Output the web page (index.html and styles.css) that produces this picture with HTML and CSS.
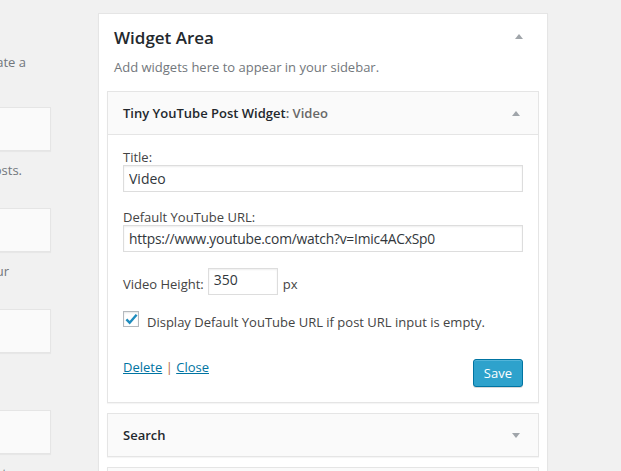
FILE: index.html
```html
<!DOCTYPE html>
<html lang="en">
<head>
<meta charset="utf-8">
<title>Widgets</title>
<link rel="stylesheet" href="styles.css">
</head>
<body>
<div class="page">
  <div class="available">
    <p class="intro">To activate a</p>
    <div class="avail-item">
      <div class="avail-box"></div>
      <p class="avail-desc desc-1">Your site’s most recent Posts.</p>
    </div>
    <div class="avail-item">
      <div class="avail-box"></div>
      <p class="avail-desc desc-2">A monthly archive of your</p>
    </div>
    <div class="avail-item">
      <div class="avail-box"></div>
      <p class="avail-desc desc-3">Links.</p>
    </div>
    <div class="avail-item">
      <div class="avail-box"></div>
      <p class="avail-desc desc-4">Your site’s most recent comments</p>
    </div>
  </div>

  <div class="sidebar">
    <div class="sidebar-head">
      <h2 class="sidebar-title">Widget Area</h2>
      <svg class="arrow arrow-sidebar" width="8" height="5" viewBox="0 0 8 5"><path d="M0 5 L4 0 L8 5 Z"/></svg>
    </div>
    <p class="sidebar-desc">Add widgets here to appear in your sidebar.</p>

    <div class="widget">
      <div class="widget-top">
        <h3 class="widget-title">Tiny YouTube Post Widget<span class="in-title">: Video</span></h3>
        <svg class="arrow" width="8" height="5" viewBox="0 0 8 5"><path d="M0 5 L4 0 L8 5 Z"/></svg>
      </div>
      <div class="widget-body">
        <label class="field-label">Title:</label>
        <input class="text-input" type="text" value="Video">
        <label class="field-label field-gap">Default YouTube URL:</label>
        <input class="text-input url-input" type="text" value="https://www.youtube.com/watch?v=Imic4ACxSp0">
        <div class="height-row">
          <span class="row-label">Video Height:</span>
          <input class="small-input" type="text" value="350">
          <span class="row-label">px</span>
        </div>
        <div class="check-row">
          <span class="checkbox">
            <svg width="14" height="12" viewBox="0 0 14 12"><path d="M1.5 6.5 L5 10 L12.5 1.5" fill="none" stroke="#1e8cbe" stroke-width="2.6" stroke-linejoin="miter"/></svg>
          </span>
          <span class="check-label">Display Default YouTube URL if post URL input is empty.</span>
        </div>
        <div class="actions">
          <div class="links"><a href="#" class="link">Delete</a> <span class="sep">|</span> <a href="#" class="link">Close</a></div>
          <button class="save">Save</button>
        </div>
      </div>
    </div>

    <div class="widget collapsed">
      <div class="widget-top no-border">
        <h3 class="widget-title">Search</h3>
        <svg class="arrow" width="8" height="5" viewBox="0 0 8 5"><path d="M0 0 L8 0 L4 5 Z"/></svg>
      </div>
    </div>

    <div class="widget collapsed">
      <div class="widget-top no-border">
        <h3 class="widget-title">Recent Posts</h3>
      </div>
    </div>
  </div>
</div>
</body>
</html>
```

FILE: styles.css
```css
html, body {
  margin: 0;
  padding: 0;
  height: 100%;
  overflow: hidden;
}
body {
  background: #f1f1f1;
  font-family: "Open Sans", "Liberation Sans", sans-serif;
  color: #444;
  font-size: 13px;
}
.page {
  display: flex;
  align-items: flex-start;
}

/* left column of available widgets (cut off at the left edge) */
.available {
  width: 259px;
  margin-left: -208px;
  flex: none;
  display: flex;
  flex-direction: column;
}
.intro {
  margin: 52px 0 35px;
  line-height: 20px;
  text-align: right;
  padding-right: 25px;
  color: #72777c;
  white-space: nowrap;
}
.avail-item {
  display: flex;
  flex-direction: column;
  margin-bottom: 27px;
}
.avail-box {
  height: 42px;
  background: #fafafa;
  border: 1px solid #e5e5e5;
  box-shadow: 0 1px 1px rgba(0,0,0,0.04);
}
.avail-desc {
  margin: 9px 0 1px;
  line-height: 20px;
  color: #72777c;
  white-space: nowrap;
  text-align: right;
}
.desc-1 { padding-right: 29px; }
.desc-2 { padding-right: 42px; }
.desc-3 { padding-right: 260px; }
.desc-4 { padding-right: 38px; }

/* the sidebar panel */
.sidebar {
  margin-left: 47px;
  margin-top: 13px;
  width: 432px;
  padding: 0 8px 20px;
  background: #fff;
  border: 1px solid #e5e5e5;
  box-shadow: 0 1px 1px rgba(0,0,0,0.04);
  min-height: 480px;
}
.sidebar-head {
  display: flex;
  align-items: center;
  justify-content: space-between;
  padding: 12px 16px 0 7px;
}
.sidebar-title {
  margin: 0;
  font-size: 17px;
  line-height: 24px;
  font-weight: 600;
  color: #23282d;
}
.arrow {
  fill: #a0a5aa;
  flex: none;
}
.arrow-sidebar {
  margin-top: -4px;
}
.sidebar-desc {
  margin: 7px 0 14px 7px;
  line-height: 20px;
  color: #72777c;
}

.widget {
  background: #fff;
  border: 1px solid #e5e5e5;
  box-shadow: 0 1px 1px rgba(0,0,0,0.04);
}
.widget + .widget {
  margin-top: 10px;
}
.widget-top {
  height: 42px;
  background: #fafafa;
  border-bottom: 1px solid #e5e5e5;
  display: flex;
  align-items: center;
  justify-content: space-between;
  padding: 0 18px 0 15px;
}
.widget-top.no-border {
  border-bottom: 0;
}
.widget-title {
  margin: 0;
  font-size: 13px;
  line-height: 20px;
  font-weight: 600;
  color: #23282d;
}
.in-title {
  color: #686868;
}
.widget-body {
  padding: 14px 15px 15px;
  display: flex;
  flex-direction: column;
}
.field-label {
  display: block;
  line-height: 16px;
  color: #444;
}
.field-gap {
  margin-top: 17px;
}
.text-input, .small-input {
  box-sizing: border-box;
  height: 27px;
  border: 1px solid #ddd;
  box-shadow: inset 0 1px 2px rgba(0,0,0,0.07);
  background: #fff;
  font-family: "Open Sans", "Liberation Sans", sans-serif;
  font-size: 14px;
  color: #32373c;
  padding: 0 5px;
  margin: 0;
  outline: none;
}
.text-input {
  width: 100%;
}
.url-input {
  font-size: 13.8px;
  letter-spacing: -0.2px;
}
.height-row {
  display: flex;
  align-items: center;
  margin-top: 16px;
}
.row-label {
  line-height: 20px;
  padding-top: 4px;
  color: #444;
}
.small-input {
  width: 70px;
  margin: 0 5px 0 4px;
  padding: 0 5px 4px;
}
.check-row {
  display: flex;
  align-items: flex-start;
  margin-top: 16px;
  height: 16px;
}
.checkbox {
  box-sizing: border-box;
  width: 16px;
  height: 16px;
  border: 1px solid #b4b9be;
  background: #fff;
  box-shadow: inset 0 1px 2px rgba(0,0,0,0.1);
  display: flex;
  align-items: center;
  justify-content: center;
  flex: none;
}
.checkbox svg {
  margin-top: -1px;
  margin-left: 1px;
}
.check-label {
  margin-left: 8px;
  line-height: 20px;
  margin-top: 1px;
  color: #444;
}
.actions {
  display: flex;
  justify-content: space-between;
  align-items: flex-start;
  margin-top: 32px;
}
.links {
  line-height: 16px;
  color: #444;
}
.link {
  color: #0074a2;
  text-decoration: underline;
}
.sep {
  color: #b86c3c;
}
.save {
  box-sizing: border-box;
  height: 28px;
  padding: 0 10px 1px;
  background: #2ea2cc;
  border: 1px solid #0074a2;
  border-radius: 3px;
  box-shadow: inset 0 1px 0 rgba(120,200,230,0.5), 0 1px 0 rgba(0,0,0,0.15);
  color: #fff;
  font-family: "Open Sans", "Liberation Sans", sans-serif;
  font-size: 13px;
  line-height: 26px;
}
```
